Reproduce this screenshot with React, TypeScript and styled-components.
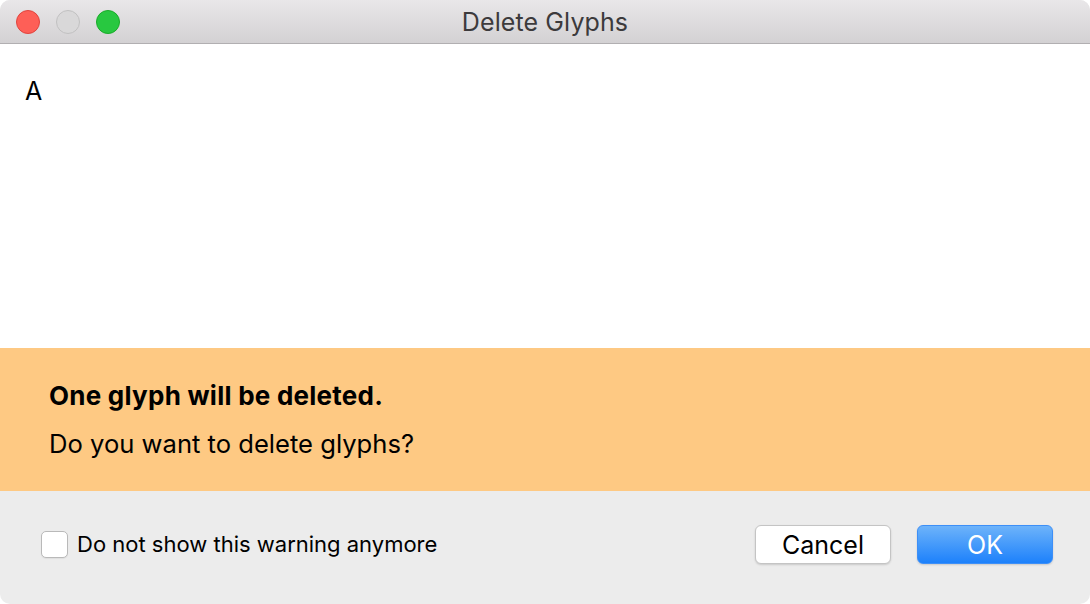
import React, { useState } from 'react'
import styled, { createGlobalStyle } from 'styled-components'

const GlobalStyle = createGlobalStyle`
	html, body {
		margin: 0;
		padding: 0;
		background: #ffffff;
	}
	body {
		font-family: Inter, 'Liberation Sans', Arial, sans-serif;
		-webkit-font-smoothing: antialiased;
	}
`

const lights = ['#fe5f57', '#d9d8d9', '#28c840']
const lightBorders = ['#e0443e', '#c1c0c1', '#1aab29']

const App: React.FC = () => {
	const [dontShow, setDontShow] = useState(false)

	return (
		<>
			<GlobalStyle />
			<StyledWindow>
				<StyledTitleBar>
					<StyledLights>
						{lights.map((c, i) => (
							<StyledLight key={c} color={c} $border={lightBorders[i]} />
						))}
					</StyledLights>
					<StyledTitle>Delete Glyphs</StyledTitle>
				</StyledTitleBar>
				<StyledContent>
					<StyledGlyphName>A</StyledGlyphName>
				</StyledContent>
				<StyledWarning>
					<StyledWarningTitle>One glyph will be deleted.</StyledWarningTitle>
					<StyledWarningText>Do you want to delete glyphs?</StyledWarningText>
				</StyledWarning>
				<StyledFooter>
					<StyledCheckLabel>
						<StyledCheckbox
							type="checkbox"
							checked={dontShow}
							onChange={(e) => setDontShow(e.target.checked)}
						/>
						Do not show this warning anymore
					</StyledCheckLabel>
					<StyledButtons>
						<StyledButton>Cancel</StyledButton>
						<StyledButton $primary>OK</StyledButton>
					</StyledButtons>
				</StyledFooter>
			</StyledWindow>
		</>
	)
}

const StyledWindow = styled.div`
	width: 1090px;
	height: 604px;
	display: flex;
	flex-direction: column;
	border-radius: 10px;
	overflow: hidden;
	background: #ececec;
`

const StyledTitleBar = styled.div`
	position: relative;
	height: 43px;
	flex-shrink: 0;
	display: flex;
	align-items: center;
	justify-content: center;
	background: linear-gradient(#e9e7e9, #d3d1d3);
	border-bottom: 1px solid #b1afb1;
`

const StyledLights = styled.div`
	position: absolute;
	left: 16px;
	top: 10px;
	display: flex;
	gap: 16px;
`

const StyledLight = styled.span<{ color: string; $border: string }>`
	width: 24px;
	height: 24px;
	border-radius: 50%;
	box-sizing: border-box;
	background: ${(props) => props.color};
	border: 1px solid ${(props) => props.$border};
`

const StyledTitle = styled.div`
	font-size: 25px;
	color: #3c3a3c;
	letter-spacing: 0.1px;
`

const StyledContent = styled.div`
	flex: 1;
	background: #ffffff;
	padding: 32px 0 0 25px;
`

const StyledGlyphName = styled.div`
	font-size: 25px;
	line-height: 30px;
	color: #000000;
`

const StyledWarning = styled.div`
	height: 143px;
	flex-shrink: 0;
	box-sizing: border-box;
	background: #fec983;
	padding: 31px 49px 0;
	color: #000000;
`

const StyledWarningTitle = styled.h3`
	margin: 0;
	font-size: 26px;
	font-weight: 700;
	letter-spacing: 0.25px;
	line-height: 34px;
`

const StyledWarningText = styled.p`
	margin: 14px 0 0;
	font-size: 25.6px;
	font-weight: 400;
	line-height: 34px;
`

const StyledFooter = styled.div`
	height: 113px;
	flex-shrink: 0;
	box-sizing: border-box;
	display: flex;
	align-items: flex-start;
	justify-content: space-between;
	padding: 34px 37px 0 41px;
`

const StyledCheckLabel = styled.label`
	display: flex;
	align-items: center;
	gap: 9px;
	font-size: 22px;
	color: #000000;
	height: 38px;
`

const StyledCheckbox = styled.input`
	appearance: none;
	margin: 0;
	width: 27px;
	height: 27px;
	border-radius: 5px;
	background: #ffffff;
	border: 1px solid #b9b9b9;
	box-sizing: border-box;
	box-shadow: 0 1px 1px rgba(0, 0, 0, 0.06);
`

const StyledButtons = styled.div`
	display: flex;
	gap: 26px;
`

const StyledButton = styled.button<{ $primary?: boolean }>`
	width: 136px;
	height: 39px;
	border-radius: 6px;
	font-family: inherit;
	font-size: 25px;
	padding: 0;
	box-sizing: border-box;
	color: ${(props) => (props.$primary ? '#ffffff' : '#000000')};
	background: ${(props) =>
		props.$primary ? 'linear-gradient(#6db3fa, #1d81fb)' : '#ffffff'};
	border: 1px solid ${(props) => (props.$primary ? '#3d8ff7' : '#c4c4c4')};
	box-shadow: 0 1px 2px rgba(0, 0, 0, 0.15);
`

export default App
